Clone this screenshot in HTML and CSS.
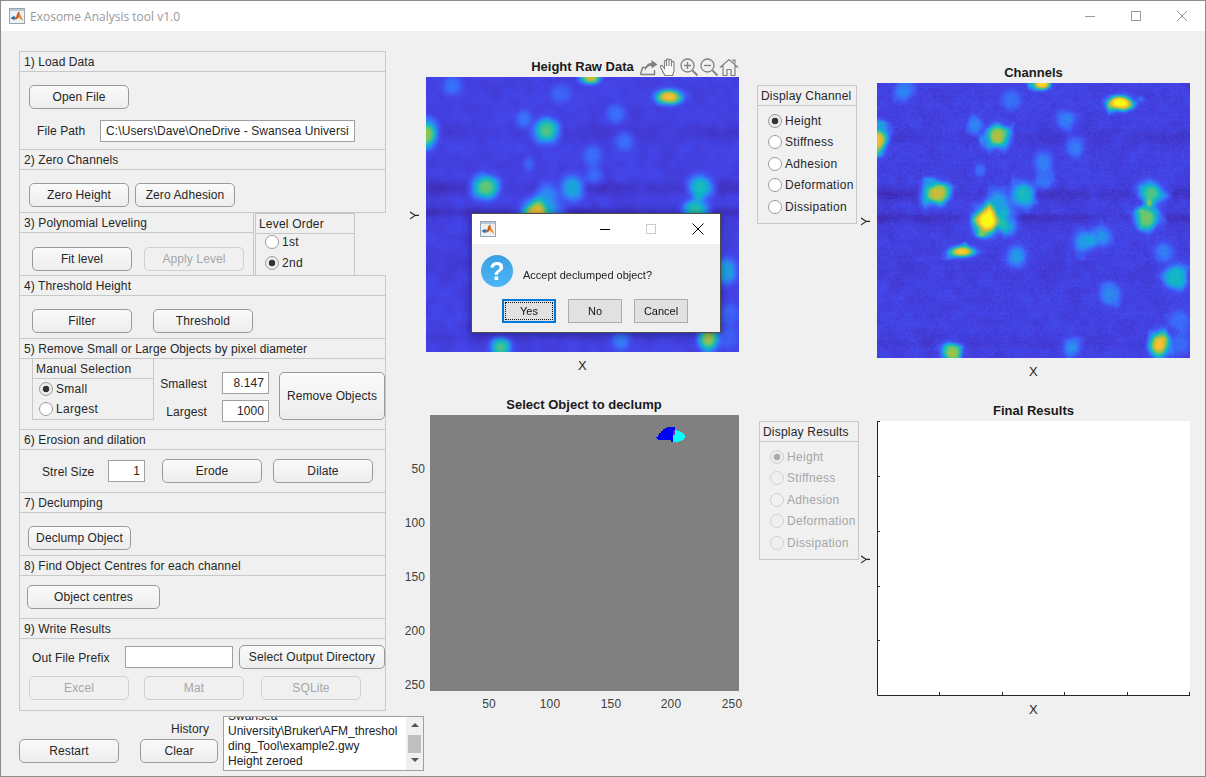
FILE: index.html
```html
<!DOCTYPE html>
<html lang="en">
<head>
    <meta charset="UTF-8">
    <title>Exosome Analysis tool v1.0</title>
    <link rel="stylesheet" href="styles.css">
    <script src="app.js" defer></script>
</head>
<body>
<div class="window">
    <div class="titlebar">
        <svg class="app-icon" width="16" height="16" viewBox="0 0 16 16"><use href="#matlab"></use></svg>
        <span class="titlebar-text">Exosome Analysis tool v1.0</span>
        <div class="window-buttons">
            <svg width="46" height="20" viewBox="0 0 46 20"><path d="M18 10.500H28" stroke="#999" fill="none"/></svg>
            <svg width="46" height="20" viewBox="0 0 46 20"><rect x="18.500" y="5.500" width="9" height="9" stroke="#999" fill="none"/></svg>
            <svg width="46" height="20" viewBox="0 0 46 20"><path d="M18 5L28 15M28 5L18 15" stroke="#999" fill="none"/></svg>
        </div>
    </div>

    <div class="client">
        <div class="controls">
            <section class="panel load-panel">
                <h3 class="panel-title">1) Load Data</h3>
                <div class="panel-body">
                    <button class="btn">Open File</button>
                    <div class="path-row">
                        <label>File Path</label>
                        <input class="field path-field" type="text" value="C:\Users\Dave\OneDrive - Swansea University\Bruker\AFM_thresholding_Tool\example2.gwy">
                    </div>
                </div>
            </section>

            <section class="panel">
                <h3 class="panel-title">2) Zero Channels</h3>
                <div class="panel-body row zero-row">
                    <button class="btn">Zero Height</button>
                    <button class="btn">Zero Adhesion</button>
                </div>
            </section>

            <div class="split">
                <section class="panel level-panel">
                    <h3 class="panel-title">3) Polynomial Leveling</h3>
                    <div class="panel-body row fit-row">
                        <button class="btn">Fit level</button>
                        <button class="btn" disabled>Apply Level</button>
                    </div>
                </section>
                <section class="panel order-panel">
                    <h3 class="panel-title">Level Order</h3>
                    <div class="order-body">
                        <label class="radio"><input type="radio" name="order">1st</label>
                        <label class="radio"><input type="radio" name="order" checked>2nd</label>
                    </div>
                </section>
            </div>

            <section class="panel">
                <h3 class="panel-title">4) Threshold Height</h3>
                <div class="panel-body row threshold-row">
                    <button class="btn">Filter</button>
                    <button class="btn">Threshold</button>
                </div>
            </section>

            <section class="panel">
                <h3 class="panel-title">5) Remove Small or Large Objects by pixel diameter</h3>
                <div class="remove-body">
                    <section class="manual-panel">
                        <h3 class="panel-title">Manual Selection</h3>
                        <div class="manual-body">
                            <label class="radio"><input type="radio" name="size" checked>Small</label>
                            <label class="radio"><input type="radio" name="size">Largest</label>
                        </div>
                    </section>
                    <div class="size-fields">
                        <label>Smallest</label><input class="field num-field" type="text" value="8.147">
                        <label>Largest</label><input class="field num-field" type="text" value="1000">
                    </div>
                    <button class="btn remove-btn">Remove Objects</button>
                </div>
            </section>

            <section class="panel">
                <h3 class="panel-title">6) Erosion and dilation</h3>
                <div class="panel-body row strel-row">
                    <label>Strel Size</label>
                    <input class="field num-field strel-field" type="text" value="1">
                    <button class="btn">Erode</button>
                    <button class="btn">Dilate</button>
                </div>
            </section>

            <section class="panel">
                <h3 class="panel-title">7) Declumping</h3>
                <div class="panel-body row declump-row">
                    <button class="btn declump-btn">Declump Object</button>
                </div>
            </section>

            <section class="panel">
                <h3 class="panel-title">8) Find Object Centres for each channel</h3>
                <div class="panel-body row centres-row">
                    <button class="btn centres-btn">Object centres</button>
                </div>
            </section>

            <section class="panel write-panel">
                <h3 class="panel-title">9) Write Results</h3>
                <div class="write-body">
                    <div class="row prefix-row">
                        <label>Out File Prefix</label>
                        <input class="field prefix-field" type="text">
                        <button class="btn output-btn">Select Output Directory</button>
                    </div>
                    <div class="row export-row">
                        <button class="btn" disabled>Excel</button>
                        <button class="btn" disabled>Mat</button>
                        <button class="btn" disabled>SQLite</button>
                    </div>
                </div>
            </section>

            <div class="history-row">
                <button class="btn restart-btn">Restart</button>
                <div class="history-mid">
                    <span class="history-label">History</span>
                    <button class="btn clear-btn">Clear</button>
                </div>
                <div class="listbox">
                    <div class="listbox-text">
                        <div>Swansea</div>
                        <div>University\Bruker\AFM_threshol</div>
                        <div>ding_Tool\example2.gwy</div>
                        <div>Height zeroed</div>
                    </div>
                    <div class="scrollbar">
                        <span class="arrow-up"></span>
                        <span class="thumb"></span>
                        <span class="arrow-down"></span>
                    </div>
                </div>
            </div>
        </div>

        <div class="plots">
            <div class="plot-row top-row">
                <figure class="chart raw-chart">
                    <h2 class="chart-title">Height Raw Data</h2>
                    <div class="toolbar">
                        <svg width="20" height="20" viewBox="0 0 20 20"><path d="M1.500 17.500L3.500 10.500H7M1.500 17.500H15.500V13" fill="none" stroke="#808080" stroke-width="1.400"/><path d="M5.500 14C6 8.500 9 6 12.500 6V3L18.500 7.500L12.500 11.500V8.800C10 8.800 7.500 10.500 5.500 14Z" fill="#808080"/></svg>
                        <svg width="20" height="20" viewBox="0 0 20 20"><path d="M6 18.500C4 15 2 11.500 1.500 10C1 8.500 3 7.500 4 9.500L5.500 11.500V4.500C5.500 3 7.500 3 7.500 4.500V9V3C7.500 1.500 10 1.500 10 3V9V3.500C10 2 12.500 2 12.500 3.500V9.500V5.500C12.500 4 15 4 15 5.500V13C15 15 14 16.500 13.500 18.500Z" fill="#fafafa" stroke="#808080" stroke-width="1.100"/></svg>
                        <svg width="20" height="20" viewBox="0 0 20 20"><circle cx="8.500" cy="8.500" r="6.500" fill="none" stroke="#808080" stroke-width="1.300"/><path d="M5 8.500H12M8.500 5V12" stroke="#808080" stroke-width="1.300"/><path d="M13.500 13.500L18.500 18.500" stroke="#808080" stroke-width="1.800"/></svg>
                        <svg width="20" height="20" viewBox="0 0 20 20"><circle cx="8.500" cy="8.500" r="6.500" fill="none" stroke="#808080" stroke-width="1.300"/><path d="M5 8.500H12" stroke="#808080" stroke-width="1.300"/><path d="M13.500 13.500L18.500 18.500" stroke="#808080" stroke-width="1.800"/></svg>
                        <svg width="20" height="20" viewBox="0 0 20 20"><path d="M1 10.500L10 2.500L19 10.500M4 8.500V18.500H8V12.500H12V18.500H16V8.500M14 4.500V3H16V6.500" fill="none" stroke="#808080" stroke-width="1.200"/></svg>
                    </div>
                    <div class="y-label">Y</div>
                    <canvas id="rawMap" class="heatmap" width="128" height="128"></canvas>
                    <div class="x-label">X</div>
                </figure>

                <section class="panel choice-panel channel-panel">
                    <h3 class="panel-title">Display Channel</h3>
                    <div class="choice-body">
                        <label class="radio"><input type="radio" name="channel" checked>Height</label>
                        <label class="radio"><input type="radio" name="channel">Stiffness</label>
                        <label class="radio"><input type="radio" name="channel">Adhesion</label>
                        <label class="radio"><input type="radio" name="channel">Deformation</label>
                        <label class="radio"><input type="radio" name="channel">Dissipation</label>
                    </div>
                </section>

                <figure class="chart channels-chart">
                    <h2 class="chart-title">Channels</h2>
                    <div class="y-label">Y</div>
                    <canvas id="channelMap" class="heatmap" width="256" height="256"></canvas>
                    <div class="x-label">X</div>
                </figure>
            </div>

            <div class="plot-row">
                <figure class="select-chart">
                    <h2 class="chart-title">Select Object to declump</h2>
                    <svg class="select-axes" width="350" height="300" viewBox="0 0 350 300">
                        <rect x="34" y="0" width="309" height="276" fill="#808080"/>
                        <g shape-rendering="crispEdges">
                            <path d="M260 23V22H262V20H263V18H265V16H267V14H269V13H271V12H279V16H277V27H275V25H262V24H261V23Z" fill="#0000ff"/>
                            <path d="M277 27V16H278V15H281V16H284V17H286V18H288V20H289V23H288V25H286V26H283V27Z" fill="#00ffff"/>
                            <path d="M277 16H278V15H279V20H277Z" fill="#8020c0"/>
                        </g>
                        <g class="tick-text" text-anchor="end">
                            <text x="29" y="58">50</text>
                            <text x="29" y="112">100</text>
                            <text x="29" y="166">150</text>
                            <text x="29" y="220">200</text>
                            <text x="29" y="274">250</text>
                        </g>
                        <g class="tick-text" text-anchor="middle">
                            <text x="93" y="293">50</text>
                            <text x="154" y="293">100</text>
                            <text x="215" y="293">150</text>
                            <text x="275" y="293">200</text>
                            <text x="336" y="293">250</text>
                        </g>
                    </svg>
                </figure>

                <section class="panel choice-panel results-panel">
                    <h3 class="panel-title">Display Results</h3>
                    <div class="choice-body">
                        <label class="radio"><input type="radio" name="result" checked disabled>Height</label>
                        <label class="radio"><input type="radio" name="result" disabled>Stiffness</label>
                        <label class="radio"><input type="radio" name="result" disabled>Adhesion</label>
                        <label class="radio"><input type="radio" name="result" disabled>Deformation</label>
                        <label class="radio"><input type="radio" name="result" disabled>Dissipation</label>
                    </div>
                </section>

                <figure class="chart results-chart">
                    <h2 class="chart-title">Final Results</h2>
                    <div class="y-label">Y</div>
                    <svg class="heatmap" width="313" height="275" viewBox="0 0 313 275">
                        <rect width="313" height="275" fill="#fff"/>
                        <path d="M0.500 0V274.500H313M0 0.500H3M0 55.500H3M0 110.500H3M0 165.500H3M0 219.500H3M62.500 275V271M125.500 275V271M187.500 275V271M250.500 275V271M312.500 275V271" fill="none" stroke="#262626"/>
                    </svg>
                    <div class="x-label">X</div>
                </figure>
            </div>
        </div>
    </div>

    <!-- question dialog on top of the main figure -->
    <div class="dialog">
        <div class="dialog-title">
            <svg width="16" height="16" viewBox="0 0 16 16"><use href="#matlab"></use></svg>
            <div class="dialog-buttons">
                <svg width="46" height="20" viewBox="0 0 46 20"><path d="M0 10.500H10" stroke="#000" fill="none"/></svg>
                <svg width="46" height="20" viewBox="0 0 46 20"><rect x="0.500" y="5.500" width="9" height="9" stroke="#ccc" fill="none"/></svg>
                <svg width="12" height="20" viewBox="0 0 12 20"><path d="M0.500 4.500L11.500 15.500M11.500 4.500L0.500 15.500" stroke="#000" fill="none"/></svg>
            </div>
        </div>
        <div class="dialog-message">
            <span class="question-icon">?</span>
            <span class="question-text">Accept declumped object?</span>
        </div>
        <div class="dialog-actions">
            <button class="dialog-btn default-btn"><span>Yes</span></button>
            <button class="dialog-btn">No</button>
            <button class="dialog-btn">Cancel</button>
        </div>
    </div>
</div>

<svg class="defs" width="0" height="0">
    <defs>
        <g id="matlab">
            <rect x="0.500" y="0.500" width="15" height="15" fill="#eef1f4" stroke="#9aa5ad"/>
            <rect x="1" y="1" width="14" height="2" fill="#b9c9d8"/>
            <path d="M1.500 10L5 8L7 9.500L4.500 12Z" fill="#2f6fb0"/>
            <path d="M4.500 12L7 9.500L8.500 5L10 3.500L11 8L8 11Z" fill="#c9561f"/>
            <path d="M10 3.500L12 8L14.500 13L11.500 11L9.500 9Z" fill="#f08a24"/>
        </g>
    </defs>
</svg>
</body>
</html>
```

FILE: styles.css
```css
* {
    box-sizing: border-box;
}
html, body {
    margin: 0;
    padding: 0;
}
body {
    font-family: "Liberation Sans", Arial, sans-serif;
    font-size: 12px;
    letter-spacing: 0.1px;
    color: #262626;
}
h2, h3, figure {
    margin: 0;
    padding: 0;
    font-size: 12px;
    font-weight: normal;
}
.window {
    position: relative;
    width: 1206px;
    height: 777px;
    overflow: hidden;
    background: #f0f0f0;
    border: 1px solid #8c8c8c;
}
.titlebar {
    display: flex;
    align-items: center;
    height: 30px;
    padding-left: 8px;
    background: #fff;
}
.titlebar-text {
    margin-left: 5px;
    font-family: "Open Sans", sans-serif;
    font-size: 12px;
    letter-spacing: 0;
    color: #999;
}
.window-buttons {
    display: flex;
    margin-left: auto;
}
.defs {
    position: absolute;
}

/* left column */
.client {
    display: flex;
    align-items: flex-start;
    padding: 20px 0 0 18px;
}
.controls {
    display: flex;
    flex-direction: column;
    flex: none;
    width: 367px;
}
.panel {
    margin-top: -1px;
    border: 1px solid #c8c8c8;
}
.controls > .panel:first-child {
    margin-top: 0;
}
.panel-title {
    height: 20px;
    padding-left: 4px;
    border-bottom: 1px solid #c8c8c8;
    line-height: 20px;
    letter-spacing: 0.1px;
}
.panel-body {
    height: 42px;
}
.row {
    display: flex;
    align-items: flex-start;
}
.row label {
    line-height: 26px;
    white-space: nowrap;
}
.btn {
    flex: none;
    width: 100px;
    height: 24px;
    padding: 0;
    border: 1px solid #9a9a9a;
    border-radius: 5px;
    background: linear-gradient(#fafafa, #ededed);
    font: inherit;
    letter-spacing: inherit;
    color: #262626;
}
.btn:disabled {
    border-color: #cfcfcf;
    background: #f0f0f0;
    color: #a6a6a6;
}
.field {
    height: 22px;
    padding: 0 5px;
    border: 1px solid #a0a0a0;
    border-radius: 0;
    outline: none;
    background: #fff;
    font: inherit;
    letter-spacing: inherit;
    color: #262626;
}
.row .field {
    margin-top: 1px;
}
.num-field {
    text-align: right;
}
.radio {
    display: flex;
    align-items: center;
    height: 21.5px;
    letter-spacing: 0.3px;
}
.radio input {
    appearance: none;
    flex: none;
    width: 14px;
    height: 14px;
    margin: 0 3px 0 0;
    border: 1px solid #9c9c9c;
    border-radius: 50%;
    background: #fff;
}
.radio input:checked {
    background: radial-gradient(circle, #333 3px, #eaeaea 3.6px);
}
.radio input:disabled {
    border-color: #d0d0d0;
    background: #f0f0f0;
}
.radio input:checked:disabled {
    background: radial-gradient(circle, #ababab 3px, #ececec 3.6px);
}
.radio:has(input:disabled) {
    color: #a6a6a6;
}

.load-panel .panel-body {
    height: 77px;
    padding: 13px 0 0 9px;
}
.path-row {
    display: flex;
    align-items: center;
    margin-top: 11px;
    padding-left: 8px;
}
.path-row label {
    width: 63px;
}
.path-field {
    width: 255px;
}
.zero-row {
    gap: 6px;
    padding: 13px 0 0 9px;
}
.split {
    display: flex;
    align-items: flex-start;
}
.level-panel {
    width: 235px;
}
.fit-row {
    gap: 12px;
    padding: 14px 0 0 12px;
}
.order-panel {
    width: 100px;
    height: 63px;
    margin-top: 0;
    margin-left: 1px;
}
.order-panel .panel-title,
.manual-panel .panel-title,
.choice-panel .panel-title {
    padding-left: 3px;
    letter-spacing: 0.2px;
}
.order-body {
    margin-top: -3px;
    padding-left: 9px;
}
.order-body .radio {
    height: 21px;
}
.threshold-row {
    gap: 21px;
    padding: 13px 0 0 12px;
}
.remove-body {
    display: flex;
    align-items: flex-start;
    height: 70px;
    padding-left: 12px;
}
.manual-panel {
    width: 123px;
    height: 61px;
    border: 1px solid #c8c8c8;
    border-top: 0;
}
.manual-body {
    padding-left: 6px;
}
.manual-body .radio {
    height: 20px;
}
.size-fields {
    display: grid;
    grid-template-columns: 53px 47px;
    column-gap: 15px;
    row-gap: 6px;
    align-items: center;
    width: 115px;
    margin-top: 13px;
    text-align: right;
}
.size-fields label {
    padding-top: 2px;
}
.size-fields .field {
    width: 47px;
    padding-right: 4px;
}
.remove-btn {
    width: 106px;
    height: 48px;
    margin: 13px 0 0 10px;
}
.strel-row {
    padding: 9px 0 0 22px;
}
.strel-row label {
    width: 66px;
}
.strel-field {
    width: 37px;
    padding-right: 4px;
}
.strel-row .btn:nth-of-type(1) {
    margin-left: 17px;
}
.strel-row .btn:nth-of-type(2) {
    margin-left: 11px;
}
.declump-row {
    padding: 13px 0 0 8px;
}
.declump-btn {
    width: 103px;
}
.centres-row {
    padding: 9px 0 0 7px;
}
.centres-btn {
    width: 133px;
}
.write-body {
    height: 71px;
    padding-top: 6px;
}
.prefix-row {
    height: 24px;
    padding-left: 12px;
}
.prefix-row label {
    width: 93px;
}
.prefix-field {
    width: 108px;
}
.output-btn {
    width: 146px;
    margin-left: 6px;
}
.export-row {
    margin-top: 7px;
    padding-left: 9px;
}
.export-row .btn:nth-child(2) {
    margin-left: 15px;
}
.export-row .btn:nth-child(3) {
    margin-left: 17px;
}
.history-row {
    display: flex;
    align-items: flex-start;
    width: 405px;
}
.restart-btn {
    margin-top: 28px;
}
.history-mid {
    display: flex;
    flex-direction: column;
    align-items: flex-end;
    margin: 11px 0 0 21px;
}
.history-label {
    height: 14px;
    padding-right: 9px;
    margin-bottom: 3px;
    line-height: 14px;
}
.clear-btn {
    width: 78px;
}
.listbox {
    display: flex;
    flex: none;
    width: 201px;
    height: 55px;
    margin: 5px 0 0 5px;
    border: 1px solid #a0a0a0;
    background: #fff;
    overflow: hidden;
}
.listbox-text {
    flex: 1;
    margin-top: -8px;
    padding-left: 4px;
    line-height: 15px;
    color: #222;
    letter-spacing: 0;
    white-space: nowrap;
}
.scrollbar {
    display: flex;
    flex-direction: column;
    align-items: center;
    flex: none;
    width: 17px;
    background: #f0f0f0;
}
.arrow-up, .arrow-down {
    width: 0;
    height: 0;
    border: 4px solid transparent;
}
.arrow-up {
    margin: 6px 0 6px;
    border-top-width: 0;
    border-bottom-color: #555;
}
.arrow-down {
    margin-top: 5px;
    border-bottom-width: 0;
    border-top-color: #555;
}
.thumb {
    width: 13px;
    height: 18px;
    margin-top: 2px;
    background: #c0c0c0;
}

/* plots */
.plots {
    display: flex;
    flex-direction: column;
    flex: none;
    width: 820px;
}
.plot-row {
    display: flex;
    align-items: flex-start;
}
.top-row {
    height: 347px;
}
.chart {
    position: relative;
    display: grid;
    grid-template-columns: 18px 313px;
    grid-template-rows: 17px 275px auto;
    flex: none;
}
.chart-title {
    grid-column: 2;
    font-size: 13px;
    font-weight: bold;
    letter-spacing: 0;
    line-height: 14px;
    text-align: center;
    color: #1a1a1a;
}
.y-label {
    align-self: center;
    justify-self: center;
    padding-bottom: 2px;
    padding-left: 5px;
    writing-mode: vertical-rl;
    transform: rotate(180deg);
    line-height: 14px;
    font-size: 13px;
}
.x-label {
    grid-column: 2;
    padding-top: 7px;
    text-align: center;
    line-height: 14px;
    font-size: 13px;
}
.heatmap {
    display: block;
    width: 313px;
    height: 275px;
}
.raw-chart {
    margin: 9px 0 0 22px;
}
.channels-chart {
    margin: 15px 0 0 2px;
}
.toolbar {
    position: absolute;
    top: -3px;
    right: 0;
    display: flex;
}
.choice-panel {
    flex: none;
    width: 100px;
    height: 139px;
}
.choice-body {
    padding: 4px 0 0 10px;
}
.channel-panel {
    margin: 34px 0 0 18px;
}
.results-panel {
    margin: 23px 0 0 13px;
}
.select-chart {
    flex: none;
    margin-left: 10px;
}
.select-chart .chart-title {
    height: 17px;
    padding-left: 26px;
}
.select-axes {
    display: block;
}
.tick-text {
    font-size: 12px;
    fill: #404040;
}
.results-chart {
    margin-top: 6px;
}

/* dialog */
.dialog {
    position: absolute;
    left: 470px;
    top: 212px;
    width: 250px;
    height: 120px;
    border: 1px solid #4d4d4d;
    background: #f0f0f0;
    box-shadow: 0 1px 8px rgba(0, 0, 40, 0.45);
    font-size: 11px;
    letter-spacing: 0;
    color: #222;
}
.dialog-title {
    display: flex;
    align-items: center;
    height: 30px;
    padding: 0 16px 0 8px;
    background: #fff;
}
.dialog-buttons {
    display: flex;
    margin-left: auto;
}
.dialog-message {
    display: flex;
    align-items: center;
    height: 32px;
    margin-top: 11px;
    padding-left: 9px;
}
.question-icon {
    width: 32px;
    height: 32px;
    margin-right: 10px;
    border-radius: 50%;
    background: linear-gradient(#3a9fe0, #4db6f7);
    color: #fff;
    font: bold 25px/32px "Liberation Sans", sans-serif;
    text-align: center;
}
.question-text {
    padding-top: 8px;
}
.dialog-actions {
    display: flex;
    gap: 12px;
    margin-top: 12px;
    padding-left: 30px;
}
.dialog-btn {
    width: 54px;
    height: 24px;
    padding: 0;
    border: 1px solid #adadad;
    background: #e1e1e1;
    font: inherit;
    color: #111;
}
.default-btn {
    border: 2px solid #0078d7;
    padding: 1px;
}
.default-btn span {
    display: block;
    height: 100%;
    border: 1px dotted #111;
    line-height: 16px;
}
```

FILE: app.js
```js
// Draws the two AFM height maps. Same blobs in both, the raw one is just smoother.
// Blobs: x, y, radius x, radius y, height (map coords 939 x 825)
const blobs = [
    [494, 3, 28, 17, 0.82], [729, 59, 38, 21, 0.95], [79, 26, 27, 28, 0.17],
    [404, 51, 30, 28, 0.13], [294, 126, 24, 26, 0.18], [569, 111, 27, 28, 0.16],
    [361, 161, 35, 35, 0.62], [594, 193, 27, 30, 0.16], [2, 171, 30, 38, 0.74],
    [499, 236, 27, 30, 0.16], [309, 261, 16, 20, 0.12], [504, 296, 24, 26, 0.14],
    [179, 331, 38, 34, 0.68], [439, 333, 34, 36, 0.4], [364, 351, 32, 34, 0.25],
    [824, 331, 35, 34, 0.5], [809, 406, 37, 36, 0.56], [331, 413, 40, 42, 0.98],
    [389, 416, 32, 36, 0.22], [254, 506, 40, 17, 0.78], [419, 521, 30, 34, 0.22],
    [619, 476, 30, 32, 0.23], [674, 461, 32, 32, 0.2], [859, 506, 27, 30, 0.15],
    [894, 581, 38, 38, 0.36], [699, 636, 30, 32, 0.19], [584, 791, 27, 28, 0.2],
    [847, 783, 28, 36, 0.76], [224, 811, 28, 26, 0.58], [909, 711, 32, 32, 0.12],
    [909, 781, 32, 32, 0.12]
];

// y, half thickness, depth
const bands = [
    [333, 20, 0.05], [406, 14, 0.06], [166, 24, 0.025], [570, 30, 0.015], [780, 14, 0.02]
];

const stops = [
    [0.0, 62, 38, 168], [0.1, 68, 68, 232], [0.2, 58, 108, 250], [0.3, 39, 150, 235],
    [0.4, 12, 180, 205], [0.5, 45, 192, 165], [0.6, 110, 200, 105], [0.7, 185, 190, 60],
    [0.8, 242, 186, 56], [0.9, 253, 215, 40], [1.0, 249, 251, 21]
];

function parula(v) {
    v = Math.min(1, Math.max(0, v));
    let i = 0;
    while (i < stops.length - 2 && v > stops[i + 1][0]) i++;
    const a = stops[i], b = stops[i + 1];
    const t = (v - a[0]) / (b[0] - a[0]);
    return [1, 2, 3].map(k => a[k] + (b[k] - a[k]) * t);
}

// small seeded generator so the picture is the same on every load
let seed = 12345;
function rnd() {
    seed = (seed * 16807) % 2147483647;
    return seed / 2147483647 - 0.5;
}

// coarse lumps, used for the patchy texture and the rough blob edges
const LUMP = 24;
const lumps = [];
for (let i = 0; i < 60 * 60; i++) lumps.push(rnd());

function lump(x, y) {
    const gx = x / LUMP, gy = y / LUMP;
    const ix = Math.floor(gx), iy = Math.floor(gy);
    const fx = gx - ix, fy = gy - iy;
    const at = (a, b) => lumps[(b * 60 + a) % lumps.length];
    return (at(ix, iy) * (1 - fx) + at(ix + 1, iy) * fx) * (1 - fy)
        + (at(ix, iy + 1) * (1 - fx) + at(ix + 1, iy + 1) * fx) * fy;
}

function drawMap(id, noise, rowNoise, scale, rough) {
    const canvas = document.getElementById(id);
    const ctx = canvas.getContext("2d");
    const w = canvas.width, h = canvas.height;
    const img = ctx.createImageData(w, h);
    for (let r = 0; r < h; r++) {
        const y = (r + 0.5) / h * 825;
        const rowOff = rnd() * rowNoise;
        for (let c = 0; c < w; c++) {
            const x = (c + 0.5) / w * 939;
            const patch = lump(x, y);
            let v = 0.09 + rowOff + rnd() * noise + patch * 0.035;
            const wobble = 0.7 + 0.3 * Math.sin(x / 70 + 1);
            for (const b of bands) {
                const d = (y - b[0]) / b[1];
                v -= b[2] * wobble * Math.exp(-d * d);
            }
            for (const b of blobs) {
                const dx = (x - b[0]) / b[2], dy = (y - b[1]) / b[3];
                const d2 = (dx * dx + dy * dy) * (1 + patch * rough);
                if (d2 < 9) v += b[4] * scale * Math.exp(-Math.pow(d2, 1.5));
            }
            const col = parula(v);
            const p = (r * w + c) * 4;
            img.data[p] = col[0];
            img.data[p + 1] = col[1];
            img.data[p + 2] = col[2];
            img.data[p + 3] = 255;
        }
    }
    ctx.putImageData(img, 0, 0);
}

document.addEventListener("DOMContentLoaded", function () {
    drawMap("rawMap", 0.012, 0.003, 0.78, 0.6);
    drawMap("channelMap", 0.05, 0.01, 1, 1.2);
});
```
